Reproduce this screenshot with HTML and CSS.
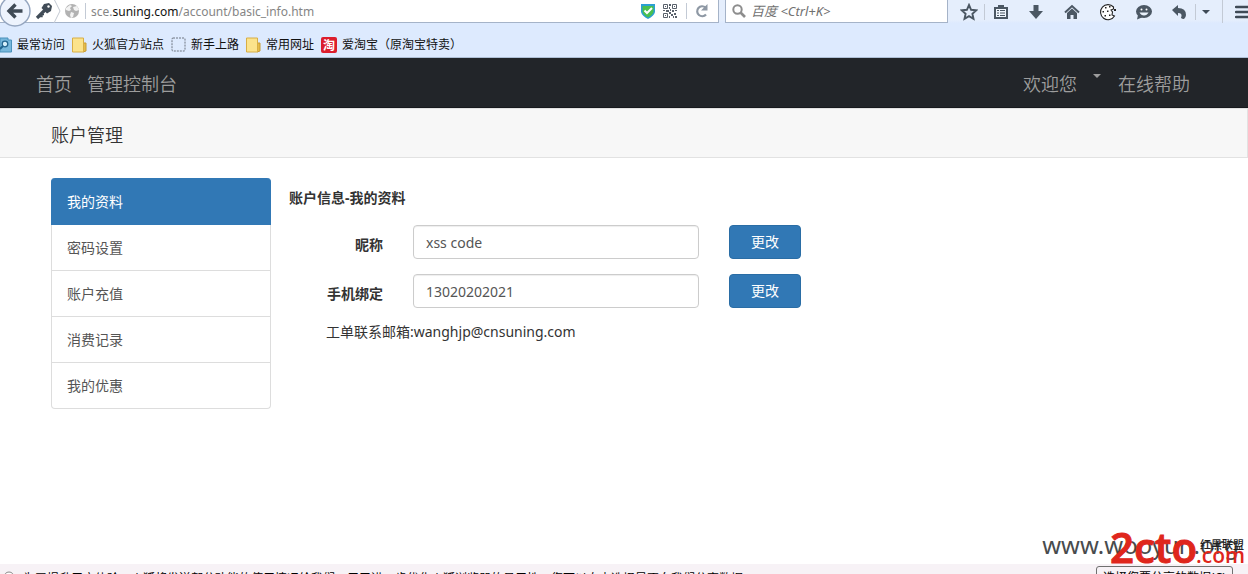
FILE: index.html
```
<!DOCTYPE html>
<html lang="zh-CN">
<head>
<meta charset="utf-8">
<title>账户管理</title>
<link rel="stylesheet" href="styles.css">
</head>
<body>
<div class="window">
  <div class="toolbar">
    <div class="urlbox">
      <button class="back" aria-label="后退"><svg width="32" height="32" viewBox="0 0 32 32"><circle cx="16" cy="16" r="15" fill="#edf3fd" stroke="#94a5bf" stroke-width="1.4"/><path d="M23.500 16H11M16.500 9.500L10 16l6.500 6.500" fill="none" stroke="#3f4a56" stroke-width="3.400"/></svg></button>
      <svg class="key" width="18" height="18" viewBox="0 0 18 18"><path d="M10 8L2 16" stroke="#414c57" stroke-width="3.200" fill="none"/><path d="M4 14.500h3v-2h2" stroke="#414c57" stroke-width="1.400" fill="none"/><path d="M9 2l5-1 3 3-1 5-4 2.500L6.500 6z" fill="#414c57"/><circle cx="13.500" cy="4.500" r="1.200" fill="#fff"/></svg>
      <svg class="chevron" width="8" height="24" viewBox="0 0 8 24"><path d="M1 0L7 12L1 24" fill="none" stroke="#c3c9d2"/></svg>
      <svg class="globe" width="16" height="16" viewBox="0 0 16 16"><circle cx="8" cy="8" r="7" fill="#b2b2b2"/><path d="M2 5l4-3 2 1-2 2 1 2-2 1-3-1zM9 4l4-1 2 4-3 1-2-1zM7 9l3 1-1 4-2 1-1-3z" fill="#f3f3f3"/></svg>
      <i class="sep"></i>
      <div class="url" role="textbox" aria-label="网址">sce.<b>suning.com</b>/account/basic_info.htm</div>
      <svg width="14" height="16" viewBox="0 0 14 16"><path d="M0 1h14v8q-1 4-7 7Q1 13 0 9z" fill="#2b9fd3"/><path d="M1.500 3h11v6q-1 3-5.500 5.500Q2.500 12 1.500 9z" fill="#4ac04f"/><path d="M3.500 7.500L6 10l5-5" fill="none" stroke="#fff" stroke-width="2"/></svg>
      <svg class="qr" width="14" height="14" viewBox="0 0 14 14"><path d="M.5.5h4v4h-4zM9.500.5h4v4h-4zM.5 9.500h4v4h-4z" fill="none" stroke="#59616b"/><path d="M2 2h1v1H2zM11 2h1v1h-1zM2 11h1v1H2zM6 0h2v2H6zM6 3h1v2H6zM7 5h1v2H7zM0 6h2v1H0zM3 6h3v2H3zM9 6h2v2H9zM12 6h2v1h-2zM6 8h2v2H6zM8 10h2v2H8zM11 9h2v2h-2zM6 12h1v2H6zM10 12h1v2h-1zM12 12h2v2h-2z" fill="#59616b"/></svg>
      <i class="sep"></i>
      <button class="reload" aria-label="刷新"><svg width="14" height="14" viewBox="0 0 14 14"><path d="M11 10.500A5 5 0 1 1 10.500 3.500" fill="none" stroke="#8e98a4" stroke-width="2.200"/><path d="M12.500 0v6.500H6z" fill="#8e98a4"/></svg></button>
    </div>
    <div class="search">
      <svg width="14" height="14" viewBox="0 0 14 14"><circle cx="5.500" cy="5.500" r="4.200" fill="none" stroke="#8d8d8d" stroke-width="2"/><path d="M8.500 8.500L13 13" stroke="#8d8d8d" stroke-width="2.600"/></svg>
      <input class="search-input" aria-label="搜索" placeholder="百度 &lt;Ctrl+K&gt;">
    </div>
    <div class="tools">
      <button class="tool narrow" aria-label="收藏"><svg width="18" height="18" viewBox="0 0 18 18"><path d="M9 2l2.100 4.800 5.200.5-3.900 3.500 1.100 5.100L9 13.200l-4.500 2.700 1.100-5.100L1.700 7.300l5.200-.5z" fill="none" stroke="#4b5763" stroke-width="1.900"/></svg></button>
      <i class="sep"></i>
      <button class="tool clip" aria-label="书签"><svg width="16" height="16" viewBox="0 0 16 16"><path d="M5 3V1h6v2h4v12H1V3z" fill="#4b5763"/><path d="M3 5h10v8H3z" fill="#f0f6fd"/><path d="M4 6h2v1H4zM7 6h5v1H7zM4 8.500h2v1H4zM7 8.500h5v1H7zM4 11h2v1H4zM7 11h5v1H7z" fill="#4b5763"/></svg></button>
      <button class="tool" aria-label="下载"><svg width="16" height="16" viewBox="0 0 16 16"><path d="M5.500 1h5v6H15l-7 8-7-8h4.500z" fill="#4b5763"/></svg></button>
      <button class="tool" aria-label="主页"><svg width="16" height="16" viewBox="0 0 16 16"><path d="M1 8.500L8 2l7 6.500" fill="none" stroke="#4b5763" stroke-width="2"/><path d="M3 9l5-4.500L13 9v6H9.500v-4h-3v4H3z" fill="#4b5763"/></svg></button>
      <button class="tool" aria-label="饼干"><svg width="18" height="18" viewBox="0 0 18 18"><path d="M14.500 4A7.500 7.500 0 1 0 15.500 13l-2.500-1 .5-3-1.500-2L14.500 6z" fill="#fff" stroke="#222" stroke-width="1.100"/><path d="M6 4h1.500v1.500H6zM10 3h1.500v1.500H10zM3.500 8H5v1.500H3.500zM8 7.500h1.500V9H8zM5.500 12H7v1.500H5.500zM10 11.500h1.500V13H10zM15 6h2v2h-2z" fill="#222"/></svg></button>
      <button class="tool" aria-label="聊天"><svg width="18" height="16" viewBox="0 0 18 16"><ellipse cx="9" cy="7.500" rx="8" ry="6.500" fill="#4b5763"/><path d="M3 11l-1 4.500L8 13z" fill="#4b5763"/><circle cx="6.500" cy="5.500" r="1" fill="#fff"/><circle cx="11.500" cy="5.500" r="1" fill="#fff"/><path d="M4.500 8.500h9Q12 11.500 9 11.500T4.500 8.500z" fill="#e9f1fb"/></svg></button>
      <button class="tool mid" aria-label="撤销"><svg width="16" height="16" viewBox="0 0 16 16"><path d="M1 6l6-5v3q8 0 8 7 0 2-2 4-2 0-3-1 2-5-3-5v3z" fill="#4b5763"/></svg></button>
      <i class="sep"></i>
      <button class="tool drop" aria-label="更多"><svg width="8" height="4" viewBox="0 0 8 4"><path d="M0 0h8L4 4z" fill="#3f4a56"/></svg></button>
      <i class="sep tall"></i>
      <button class="tool menu" aria-label="菜单"><svg width="16" height="14" viewBox="0 0 16 14"><path d="M1 2h15M1 7h15M1 12h15" stroke="#3f4a56" stroke-width="2.400" stroke-linecap="round"/></svg></button>
    </div>
  </div>
  <div class="bookmarks">
    <a class="mark" href="#"><svg class="recent" width="12" height="16" viewBox="0 0 12 16"><path d="M0 1h8v2h3.500v12H0z" fill="#77b7dc" stroke="#4a91bb"/><circle cx="5" cy="7" r="2.800" fill="#d7effb" stroke="#23658f" stroke-width="1.300"/><path d="M3 9l-3 3" stroke="#23658f" stroke-width="2"/></svg>最常访问</a>
    <a class="mark" href="#"><svg width="15" height="16" viewBox="0 0 15 16"><path d="M10 6h4v8l-3 1z" fill="#e5bd4a" stroke="#c79b35"/><path d="M.5 1h11v14H.5z" fill="#fbe38c" stroke="#d8ae45"/></svg>火狐官方站点</a>
    <a class="mark" href="#"><svg width="15" height="15" viewBox="0 0 15 15"><rect x="1" y="1" width="13" height="13" rx="1" fill="none" stroke="#6c7480" stroke-dasharray="2 1"/></svg>新手上路</a>
    <a class="mark" href="#"><svg width="15" height="16" viewBox="0 0 15 16"><path d="M10 6h4v8l-3 1z" fill="#e5bd4a" stroke="#c79b35"/><path d="M.5 1h11v14H.5z" fill="#fbe38c" stroke="#d8ae45"/></svg>常用网址</a>
    <a class="mark" href="#"><span class="tao">淘</span>爱淘宝（原淘宝特卖）</a>
  </div>
  <nav class="navbar">
    <a href="#">首页</a>
    <a href="#">管理控制台</a>
    <a class="welcome" href="#">欢迎您<i class="caret"></i></a>
    <a href="#">在线帮助</a>
  </nav>
  <h1 class="subhead">账户管理</h1>
  <div class="content">
    <div class="side">
      <a class="item active" href="#">我的资料</a>
      <a class="item" href="#">密码设置</a>
      <a class="item" href="#">账户充值</a>
      <a class="item" href="#">消费记录</a>
      <a class="item" href="#">我的优惠</a>
    </div>
    <main class="panel">
      <h2 class="title">账户信息-我的资料</h2>
      <form class="form">
        <label for="nick">昵称</label>
        <input class="field" id="nick" value="xss code">
        <button class="change" type="button">更改</button>
        <label for="phone">手机绑定</label>
        <input class="field" id="phone" value="13020202021">
        <button class="change" type="button">更改</button>
      </form>
      <p class="contact">工单联系邮箱:wanghjp@cnsuning.com</p>
    </main>
  </div>
  <div class="notice">
    <svg width="12" height="12" viewBox="0 0 12 12"><circle cx="6" cy="6" r="5" fill="#fff" stroke="#888"/></svg>
    <span>为了提升用户体验，火狐将发送部分功能的使用情况给我们，用于进一步优化火狐浏览器的易用性，您可以自由选择是否向我们分享数据。</span>
    <button class="choose">选择您要分享的数据(C)</button>
  </div>
  <div class="watermark">www.wooyun.org</div>
  <svg class="logo" width="140" height="44" viewBox="0 0 140 44">
    <text class="logo-main" x="1" y="38">2cto</text>
    <text class="logo-com" x="87" y="38">.com</text>
    <text class="logo-cn" x="91" y="24">红黑联盟</text>
  </svg>
</div>
</body>
</html>
```
FILE: styles.css
```
* { box-sizing: border-box; }
body {
  margin: 0;
  font: 14px/20px "Noto Sans", "Noto Sans CJK SC", sans-serif;
  color: #333;
  background: #fff;
}
a { color: inherit; text-decoration: none; }
button { border: 0; padding: 0; background: none; font: inherit; }
svg { display: block; flex: none; }
.window {
  position: relative;
  display: flex;
  flex-direction: column;
  height: 100vh;
  overflow: hidden;
}

.toolbar {
  display: flex;
  height: 23px;
  flex: none;
  background: linear-gradient(#e5eefc 0 20px, #ddeafe);
}
.urlbox {
  position: relative;
  display: flex;
  flex: 1;
  align-items: center;
  padding: 0 9px 0 35px;
  background: #fff;
  border: solid #a5b3c8;
  border-width: 0 1px 1px 0;
}
.back { position: absolute; left: -1px; top: -5px; }
.chevron { margin: 0 3px 0 0; }
.sep { width: 1px; height: 16px; background: #c3cad5; flex: none; }
.globe + .sep { margin: 0 5px; }
.url { flex: 1; padding-top: 2px; font-size: 12px; color: #858585; }
.url b { font-weight: 400; color: #111; }
.qr { margin: 0 9px 0 8px; }
.reload { margin-left: 8px; }
.search {
  display: flex;
  align-items: center;
  gap: 5px;
  width: 223px;
  margin-left: 6px;
  padding-left: 6px;
  background: #fff;
  border: solid #a5b3c8;
  border-width: 0 1px 1px;
}
.search-input {
  flex: 1;
  min-width: 0;
  padding: 0;
  border: 0;
  background: none;
  font: italic 13px/18px "Noto Sans", "Noto Sans CJK SC", sans-serif;
}
.search-input::placeholder { color: #707070; }
.tools { display: flex; align-items: center; width: 300px; padding-left: 6px; }
.tool { display: flex; justify-content: center; width: 36px; flex: none; }
.narrow { width: 30px; }
.clip { width: 31px; margin-right: 2px; }
.mid { width: 33px; }
.drop { width: 20px; }
.tall { height: 23px; margin-left: 6px; }
.menu { width: 16px; margin-left: 12px; }

.bookmarks {
  display: flex;
  align-items: center;
  gap: 7px;
  height: 35px;
  flex: none;
  padding-top: 9px;
  background: #ddeafe;
  border-bottom: 1px solid #aebfd5;
  font-size: 12px;
  color: #111;
}
.mark { display: flex; align-items: center; gap: 5px; }
.tao {
  width: 16px;
  background: #dc1e2d;
  border-radius: 2px;
  color: #fff;
  font: bold 12px/16px "Noto Sans CJK SC", sans-serif;
  text-align: center;
}

.navbar {
  display: flex;
  gap: 15px;
  align-items: center;
  height: 50px;
  flex: none;
  padding: 0 58px 0 36px;
  background: #222529;
  border-bottom: 1px solid #17191d;
  color: #9d9d9d;
  font: 350 18px/26px "Noto Sans CJK SC", sans-serif;
}
.welcome { display: flex; gap: 16px; margin: 0 2px 0 auto; }
.caret {
  height: 4px;
  margin-top: 4px;
  border: solid transparent;
  border-width: 4px 4px 0;
  border-top-color: #9d9d9d;
}
.subhead {
  flex: none;
  margin: 0;
  padding: 13px 51px 10px;
  border: solid #e2e2e2;
  border-width: 1px 1px 1px 0;
  background: #f7f7f7;
  font: 350 18px/25px "Noto Sans CJK SC", sans-serif;
}
.content {
  display: flex;
  flex: 1;
  gap: 18px;
  min-height: 0;
  padding: 20px 51px 0;
}
.side { width: 220px; flex: none; }
.item {
  display: block;
  padding: 13px 15px 12px;
  border: solid #ddd;
  border-width: 0 1px 1px;
  color: #555;
}
.active {
  padding: 14px 15px 12px;
  background: #3178b5;
  border-color: #3178b5;
  border-radius: 4px 4px 0 0;
  color: #fff;
}
.item:last-child { border-radius: 0 0 4px 4px; }
.panel { flex: 1; }
.title { margin: 10px 0 17px; font-size: 14px; line-height: 20px; }
.form {
  display: grid;
  grid-template-columns: 94px minmax(0, 286px) 72px;
  gap: 15px 30px;
}
.form label { padding-top: 10px; font-weight: 700; text-align: right; }
.field {
  height: 34px;
  width: 100%;
  padding: 6px 12px;
  border: 1px solid #ccc;
  border-radius: 4px;
  box-shadow: inset 0 1px 1px #eee;
  color: #555;
  font: inherit;
}
.change {
  height: 34px;
  border: 1px solid #2a6da5;
  border-radius: 4px;
  background: #3178b5;
  color: #fff;
}
.contact { margin: 14px 0 0 37px; }

.notice {
  display: flex;
  gap: 8px;
  height: 10px;
  flex: none;
  padding: 7px 15px 0 3px;
  overflow: hidden;
  background: #f7f2f6;
  color: #000;
  font-size: 12px;
  line-height: 16px;
}
.notice span { flex: 1; white-space: nowrap; }
.choose {
  width: 137px;
  height: 24px;
  margin-top: -5px;
  border: 1px solid #707070;
  border-radius: 3px;
}
.watermark {
  position: absolute;
  right: 9px;
  bottom: 15px;
  font-size: 24px;
  line-height: 28px;
  color: #484b4d;
}
.logo { position: absolute; right: -1px; bottom: 5px; }
.logo-main, .logo-com {
  fill: #df261c;
  stroke: #df261c;
  font-family: "Open Sans", sans-serif;
  font-weight: 600;
}
.logo-main { font-size: 42px; stroke-width: 1px; }
.logo-com { font-size: 21px; stroke-width: 0; }
.logo-cn { fill: #222; font: 500 11px "Noto Sans CJK SC", sans-serif; }
```
